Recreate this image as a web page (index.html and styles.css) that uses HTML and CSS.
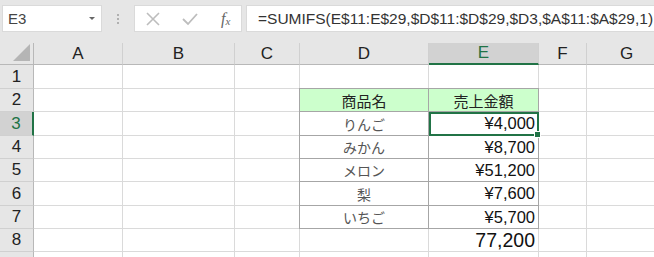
FILE: index.html
```html
<!DOCTYPE html>
<html>
<head>
    <title>Sheet</title>
    <link rel="stylesheet" href="styles.css">
</head>
<body>
    <div class="topbar">
        <div class="namebox">
            <span>E3</span>
            <span class="caret"></span>
        </div>
        <div class="dots"><i></i><i></i><i></i></div>
        <div class="fxbox">
            <svg class="ico" width="16" height="16" viewBox="0 0 16 16"><path d="M2 2 L14 14 M14 2 L2 14" stroke="#bdbdbd" stroke-width="1.6" fill="none"/></svg>
            <svg class="ico" width="18" height="16" viewBox="0 0 18 16"><path d="M2 8 L7 13 L16 3" stroke="#bdbdbd" stroke-width="1.8" fill="none"/></svg>
            <span class="fx">f<sub>x</sub></span>
        </div>
        <div class="formula">=SUMIFS(E$11:E$29,$D$11:$D$29,$D3,$A$11:$A$29,1)</div>
    </div>

    <div class="sheet">
        <div class="hd corner"><span class="tri"></span></div>
        <div class="hd">A</div>
        <div class="hd">B</div>
        <div class="hd">C</div>
        <div class="hd">D</div>
        <div class="hd sel-col">E</div>
        <div class="hd">F</div>
        <div class="hd">G</div>

        <div class="rh">1</div>
        <div class="c"></div><div class="c"></div><div class="c"></div><div class="c"></div><div class="c"></div><div class="c"></div><div class="c"></div>

        <div class="rh">2</div>
        <div class="c"></div><div class="c"></div><div class="c"></div>
        <div class="c t th tl tt">商品名</div>
        <div class="c t th tt">売上金額</div>
        <div class="c"></div><div class="c"></div>

        <div class="rh sel-row">3</div>
        <div class="c"></div><div class="c"></div><div class="c"></div>
        <div class="c t tl name">りんご</div>
        <div class="c t num active">¥4,000<span class="handle"></span></div>
        <div class="c"></div><div class="c"></div>

        <div class="rh">4</div>
        <div class="c"></div><div class="c"></div><div class="c"></div>
        <div class="c t tl name">みかん</div>
        <div class="c t num">¥8,700</div>
        <div class="c"></div><div class="c"></div>

        <div class="rh">5</div>
        <div class="c"></div><div class="c"></div><div class="c"></div>
        <div class="c t tl name">メロン</div>
        <div class="c t num">¥51,200</div>
        <div class="c"></div><div class="c"></div>

        <div class="rh">6</div>
        <div class="c"></div><div class="c"></div><div class="c"></div>
        <div class="c t tl name">梨</div>
        <div class="c t num">¥7,600</div>
        <div class="c"></div><div class="c"></div>

        <div class="rh">7</div>
        <div class="c"></div><div class="c"></div><div class="c"></div>
        <div class="c t tl name">いちご</div>
        <div class="c t num">¥5,700</div>
        <div class="c"></div><div class="c"></div>

        <div class="rh">8</div>
        <div class="c"></div><div class="c"></div><div class="c"></div><div class="c"></div>
        <div class="c num total">77,200</div>
        <div class="c"></div><div class="c"></div>

        <div class="rh"></div>
        <div class="c"></div><div class="c"></div><div class="c"></div><div class="c"></div><div class="c"></div><div class="c"></div><div class="c"></div>
    </div>
</body>
</html>
```

FILE: styles.css
```css
body {
    margin: 0;
    width: 654px;
    height: 257px;
    overflow: hidden;
    background: #fff;
    font-family: "Liberation Sans", Arial, "Noto Sans CJK JP", sans-serif;
}
.topbar {
    height: 43px;
    background: #e6e6e6;
    display: flex;
    align-items: flex-start;
    padding-top: 5px;
    box-sizing: border-box;
}
.topbar > * {
    flex-shrink: 0;
}
.namebox {
    margin-left: 2px;
    width: 100px;
    height: 27px;
    background: #fff;
    border: 1px solid #dadada;
    box-sizing: border-box;
    display: flex;
    align-items: center;
    justify-content: space-between;
    padding: 0 6px 0 5px;
    font-size: 15px;
    color: #444;
}
.caret {
    width: 0;
    height: 0;
    border-left: 3px solid transparent;
    border-right: 3px solid transparent;
    border-top: 3px solid #666;
}
.dots {
    width: 32px;
    height: 27px;
    display: flex;
    flex-direction: column;
    align-items: center;
    justify-content: center;
    gap: 2px;
}
.dots i {
    width: 2px;
    height: 2px;
    background: #b0b0b0;
}
.fxbox {
    width: 108px;
    height: 27px;
    background: #fff;
    border: 1px solid #dadada;
    box-sizing: border-box;
    display: flex;
    align-items: center;
    padding-left: 10px;
    gap: 20px;
}
.fx {
    font-family: "Liberation Serif", serif;
    font-style: italic;
    font-size: 16px;
    color: #666;
    margin-left: 2px;
}
.fx sub {
    font-size: 11px;
    vertical-align: -1px;
}
.formula {
    margin-left: 4px;
    flex: 1 1 0;
    min-width: 0;
    overflow: hidden;
    height: 27px;
    background: #fff;
    border: 1px solid #dadada;
    border-right: none;
    box-sizing: border-box;
    padding-left: 11px;
    line-height: 25px;
    font-size: 15.5px;
    color: #333;
    white-space: nowrap;
}
.sheet {
    display: grid;
    grid-template-columns: 34px 89px 112px 65px 129px 110px 48px 80px;
    grid-template-rows: 22px 24px 23px 24px 23px 23px 24px 23px 23px 10px;
}
.hd {
    background: #e6e6e6;
    border-right: 1px solid #d0d0d0;
    border-bottom: 1px solid #b8b8b8;
    box-sizing: border-box;
    display: flex;
    align-items: center;
    justify-content: center;
    font-size: 17px;
    color: #222;
}
.corner {
    position: relative;
    border-right-color: #b8b8b8;
}
.tri {
    position: absolute;
    right: 3px;
    bottom: 3px;
    width: 0;
    height: 0;
    border-left: 17px solid transparent;
    border-bottom: 17px solid #b5b5b5;
}
.sel-col {
    background: #d2d2d2;
    color: #217346;
    border-bottom: 2px solid #217346;
}
.rh {
    background: #e6e6e6;
    border-right: 1px solid #b8b8b8;
    border-bottom: 1px solid #d0d0d0;
    box-sizing: border-box;
    display: flex;
    align-items: center;
    justify-content: center;
    font-size: 17px;
    color: #222;
}
.sel-row {
    background: #d2d2d2;
    color: #217346;
    border-right: 2px solid #217346;
}
.c {
    border-right: 1px solid #dadada;
    border-bottom: 1px solid #dadada;
    box-sizing: border-box;
    display: flex;
    align-items: center;
    font-size: 16.5px;
    color: #111;
    position: relative;
}
.t {
    border-right-color: #a6a6a6;
    border-bottom-color: #a6a6a6;
}
.tl {
    border-left: 1px solid #a6a6a6;
    margin-left: -1px;
}
.tt {
    border-top: 1px solid #a6a6a6;
    margin-top: -1px;
}
.th {
    background: #ccffcc;
    justify-content: center;
    font-family: "Noto Sans CJK JP", sans-serif;
    font-size: 15px;
    color: #222;
}
.name {
    justify-content: center;
    font-family: "Noto Sans CJK JP", sans-serif;
    font-size: 14px;
    color: #555;
}
.num {
    justify-content: flex-end;
    padding-right: 3px;
}
.total {
    font-size: 19.5px;
}
.active {
    outline: 2px solid #217346;
    outline-offset: -2px;
    z-index: 1;
}
.handle {
    position: absolute;
    right: -3px;
    bottom: -3px;
    width: 5px;
    height: 5px;
    background: #217346;
    border: 1px solid #fff;
}
```
